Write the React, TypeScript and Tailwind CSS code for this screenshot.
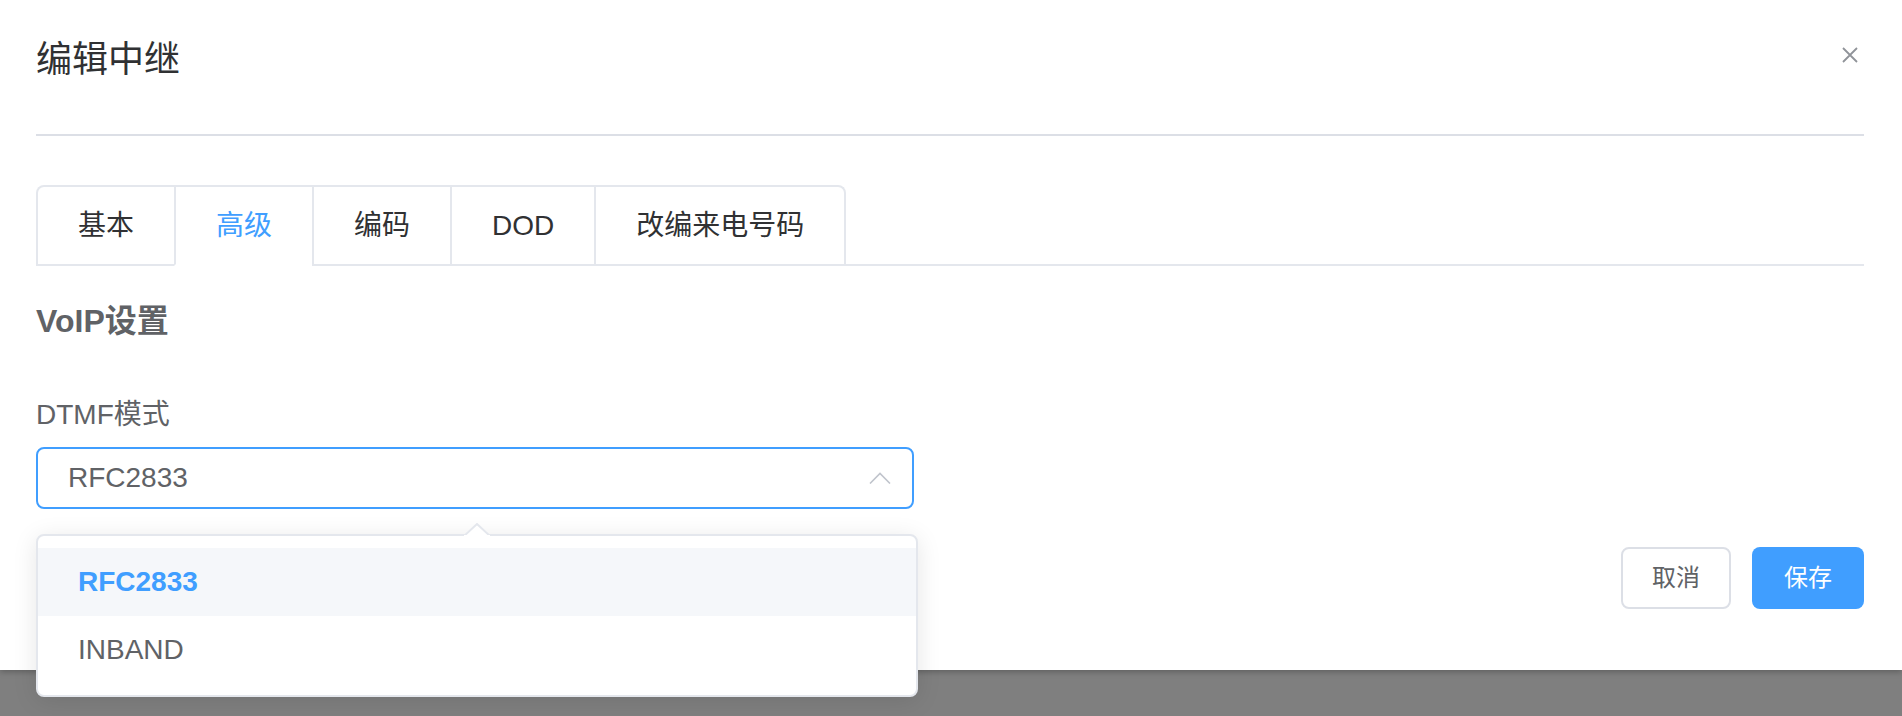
import React, { useState } from 'react';

const tabs = ['基本', '高级', '编码', 'DOD', '改编来电号码'];
const options = ['RFC2833', 'INBAND'];

export default function App() {
  const [activeTab, setActiveTab] = useState(1);
  const [value, setValue] = useState('RFC2833');

  return (
    <div className="relative h-[716px] w-full overflow-hidden bg-[#7f7f7f] font-['Liberation_Sans','Noto_Sans_CJK_SC',sans-serif]">
      {/* Dialog */}
      <div className="relative h-[670px] w-full bg-white pl-[36px] pr-[38px] shadow-[0_2px_6px_rgba(0,0,0,0.25)]">
        {/* Header */}
        <div className="flex items-start justify-between">
          <h2 className="pt-[40px] text-[36px] leading-[40px] text-[#303133]">编辑中继</h2>
          <button className="mr-[6px] mt-[47px] text-[#909399]">
            <svg width="16" height="16" viewBox="0 0 16 16" fill="none" stroke="currentColor" strokeWidth="1.8">
              <path d="M1 1L15 15M15 1L1 15" />
            </svg>
          </button>
        </div>
        <div className="mt-[54px] h-[2px] bg-[#dcdfe6]" />

        {/* Tabs */}
        <div className="mt-[49px] flex border-b-2 border-[#e4e7ed]">
          <div className="-mb-[2px] flex rounded-t-[8px] border-2 border-b-0 border-[#e4e7ed]">
            {tabs.map((tab, i) => {
              const isActive = i === activeTab;
              return (
                <button
                  key={tab}
                  onClick={() => setActiveTab(i)}
                  className={`h-[79px] border-b-2 px-[40px] text-[28px] leading-[77px] ${
                  i > 0 ? 'border-l-2 border-l-[#e4e7ed]' : ''} ${
                  isActive ? 'border-b-white text-[#409eff]' : 'border-b-transparent text-[#303133]'}`}>

                  {tab}
                </button>);

            })}
          </div>
        </div>

        {/* VoIP settings */}
        <h3 className="mt-[35px] text-[32px] font-bold leading-[40px] text-[#606266]">VoIP设置</h3>

        <div className="relative mt-[54px]">
          <label className="block text-[28px] leading-[40px] text-[#606266]">DTMF模式</label>

          <div className="mt-[12px] flex h-[62px] w-[878px] items-center justify-between rounded-[8px] border-2 border-[#409eff] pl-[30px] pr-[21px]">
            <span className="text-[28px] text-[#606266]">{value}</span>
            <svg width="22" height="12" viewBox="0 0 22 12" fill="none" stroke="#c0c4cc" strokeWidth="1.6">
              <path d="M1 11.5L11 1.5L21 11.5" />
            </svg>
          </div>

          {/* Dropdown */}
          <div className="absolute left-0 top-[139px] z-10 w-[882px] rounded-[8px] border-2 border-[#e4e7ed] bg-white pb-[11px] pt-[12px] shadow-[0_4px_24px_rgba(0,0,0,0.1)]">
            <svg className="absolute -top-[13px] left-[426px]" width="26" height="14" viewBox="0 0 26 14">
              <path d="M0 13L13 1L26 13" fill="white" stroke="#e4e7ed" strokeWidth="2" />
              <rect x="0" y="12" width="26" height="2" fill="white" />
            </svg>
            {options.map((opt) => {
              const selected = opt === value;
              return (
                <div
                  key={opt}
                  onClick={() => setValue(opt)}
                  className={`h-[68px] px-[40px] text-[28px] leading-[68px] ${
                  selected ? 'bg-[#f5f7fa] font-bold text-[#409eff]' : 'text-[#606266]'}`}>

                  {opt}
                </div>);

            })}
          </div>
        </div>

        {/* Footer */}
        <div className="mt-[38px] flex justify-end gap-[21px]">
          <button className="h-[62px] w-[110px] rounded-[8px] border-2 border-[#dcdfe6] bg-white text-[24px] text-[#606266]">
            取消
          </button>
          <button className="h-[62px] w-[112px] rounded-[8px] bg-[#409eff] text-[24px] text-white">
            保存
          </button>
        </div>
      </div>
    </div>);

}
